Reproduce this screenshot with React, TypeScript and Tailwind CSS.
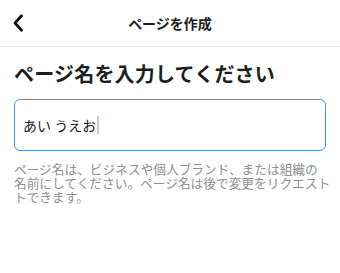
import React from "react";

const jp = { fontFamily: '"Noto Sans CJK JP", "Noto Sans", sans-serif' };

export default function App() {
  return (
    <div className="w-[340px] h-[273px] bg-white overflow-hidden" style={jp}>
      <header className="relative h-[47px] flex items-center justify-center border-b border-[#e9eaec]">
        <button className="absolute left-[10px] top-[13px] w-[16px] h-[20px] flex items-center justify-center">
          <svg width="12" height="18" viewBox="0 0 12 18" fill="none">
            <path d="M9.5 1.8 L3 9 L9.5 16.2" stroke="#111" strokeWidth="2.8" strokeLinecap="round" strokeLinejoin="round" />
          </svg>
        </button>
        <h1 className="text-[14px] font-bold text-[#1c1e21] leading-none">ページを作成</h1>
      </header>

      <main className="px-[14px]">
        <h2 className="mt-[13px] text-[20px] leading-[28px] font-bold text-[#1c1e21] tracking-[0.2px]">
          ページ名を入力してください
        </h2>

        <div className="mt-[11px] h-[52px] w-[312px] rounded-[6px] border border-[#4a8fe0] flex items-center pl-[8px]">
          <span className="text-[14px] text-[#1c1e21] leading-none">あい うえお</span>
          <span className="ml-[1px] w-[2px] h-[18px] bg-[#c5cbe0]" />
        </div>

        <p className="mt-[11px] text-[12.7px] leading-[14px] text-[#8d9095]">
          <span className="block whitespace-nowrap">ページ名は、ビジネスや個人ブランド、または組織の</span>
          <span className="block whitespace-nowrap">名前にしてください。ページ名は後で変更をリクエスト</span>
          <span className="block whitespace-nowrap">トできます。</span>
        </p>
      </main>
    </div>
  );
}
